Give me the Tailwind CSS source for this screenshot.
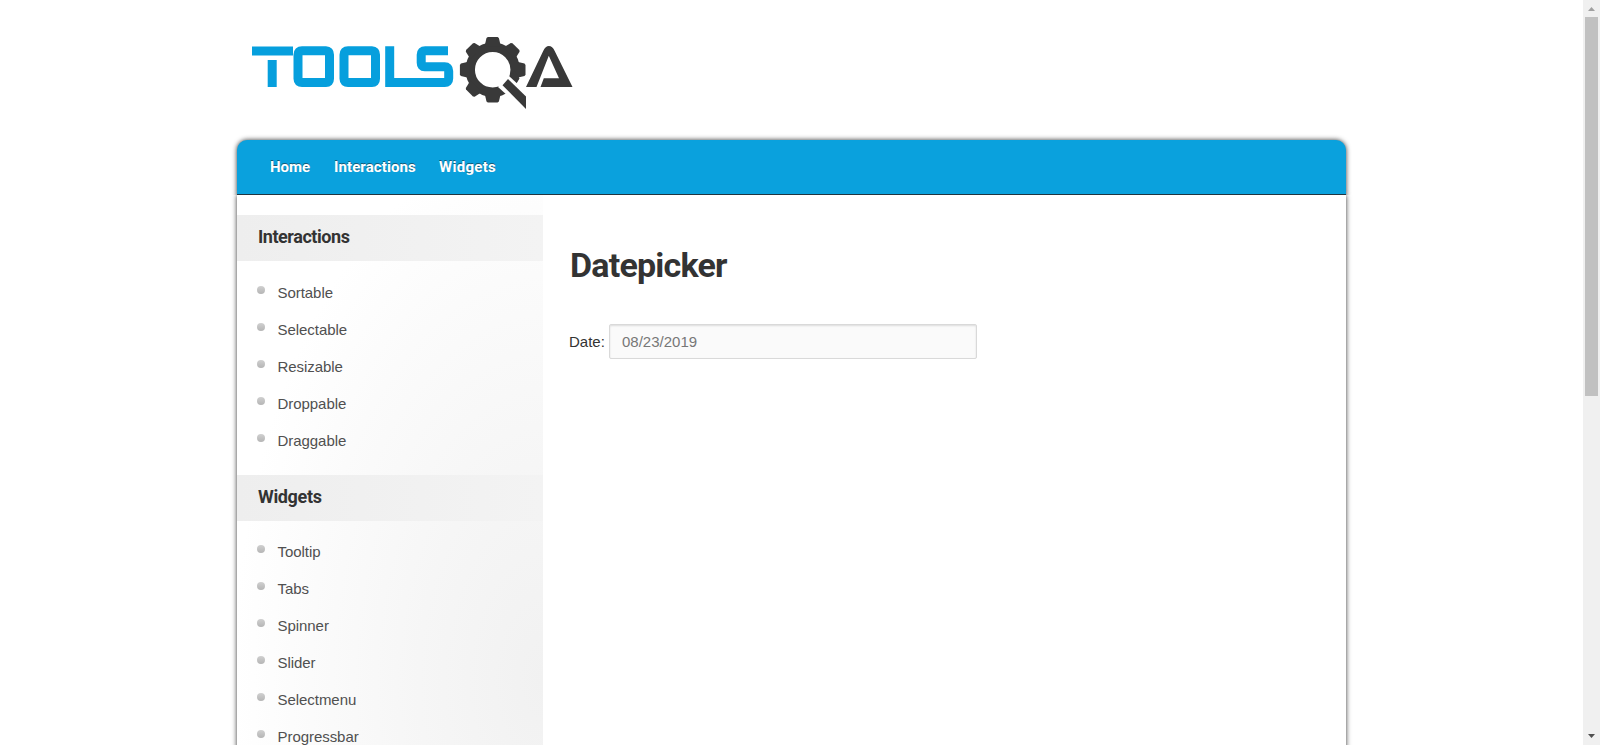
<!DOCTYPE html>
<html lang="en">
<head>
<meta charset="utf-8">
<title>Datepicker</title>
<script src="https://cdn.jsdelivr.net/npm/@tailwindcss/browser@4"></script>
</head>
<body class="flex h-[745px] overflow-hidden bg-white font-['Liberation_Sans',sans-serif] text-[15px] text-[#333]">
<div class="flex-1 overflow-hidden pl-[237px]">
  <header class="h-[140px] pt-[25px] pl-[3px]">
    <svg class="block" width="350" height="95" viewBox="240 25 350 95" role="img" aria-label="ToolsQA">
      <g fill="none" stroke="#069fdd" stroke-width="9">
        <path d="M252 51h41M272.2 60v27"/>
        <path d="M302 50.8h24q3.5 0 3.5 4v24q0 3.7-3.5 3.7h-24q-4 0-4-3.7v-24q0-4 4-4zM348 50.8h24q3.5 0 3.500 4v24q0 3.700-3.500 3.700h-24q-4 0-4-3.700v-24q0-4 4-4z"/>
        <path d="M389.7 46.3v36.2h55q4 0 4-4v-7.500q0-4.200-4-4.200h-20q-3.500 0-3.500-4v-8q0-4 4-4h22.800"/>
      </g>
      <g fill="#393939">
        <g transform="translate(0 .5)">
          <circle cx="492.700" cy="69.300" r="22.500" fill="none" stroke="#393939" stroke-width="9.500"/>
          <path id="tooth" d="M484.500 46l2-8.500 1.300-1h9.800l1.300 1 2 8.500z"/>
          <use href="#tooth" transform="rotate(45 492.700 69.300)"/>
          <use href="#tooth" transform="rotate(90 492.700 69.300)"/>
          <use href="#tooth" transform="rotate(180 492.700 69.300)"/>
          <use href="#tooth" transform="rotate(225 492.700 69.300)"/>
          <use href="#tooth" transform="rotate(270 492.700 69.300)"/>
          <use href="#tooth" transform="rotate(315 492.700 69.300)"/>
          <path d="M510 78l6.500 5 3-5-5-8z"/>
        </g>
        <path d="M498 87l11-11 19 17.500V114z" fill="#fff"/>
        <path d="M502.500 85.300l5.500-6.300 18 17.500V109z"/>
        <path d="M526 87l17.200-36q2.300-5 5.700-5 3.500 0 5.800 5L572.500 87H540.500l3.300-8.700H559l-10.200-22.500L536.500 87z"/>
      </g>
    </svg>
  </header>
  <div class="w-[1109px]">
    <nav class="relative z-10 flex h-[55px] gap-[24px] rounded-t-[10px] border-b border-[#203540] bg-[#0aa1dd] pl-[32px] pt-[15px] font-['Roboto',sans-serif] text-[15px] leading-[24px] font-bold text-white shadow-[0_0_5px_rgba(0,0,0,.8)] [clip-path:inset(-8px_-8px_0_-8px)] [text-shadow:0_-1px_0_#185b78]">
      <a class="w-[40px] pl-px tracking-[-0.050px]">Home</a>
      <a class="w-[82px] pl-px tracking-[0.100px]">Interactions</a>
      <a class="w-[57px] tracking-[0.300px]">Widgets</a>
    </nav>
    <main class="flex h-[700px] bg-white shadow-[0_0_5px_rgba(0,0,0,.8)]">
      <aside class="w-[306px] bg-[radial-gradient(ellipse_310px_540px_at_100%_485px,#f1f1f1_0%,#f6f6f6_40%,#fbfbfb_75%,#ffffff_100%)] pt-[20px]">
        <h2 class="h-[46px] bg-linear-to-r from-[#eeeeee] to-[#f3f3f3] pl-[21px] font-['Roboto',sans-serif] text-[18px] leading-[44px] font-bold tracking-[-0.450px]">Interactions</h2>
        <ul class="h-[214px] pt-[13px] leading-[37px] text-[#505050]">
          <li class="flex h-[37px] tracking-[-0.050px]"><i class="mt-[12px] mr-[12.500px] ml-[20px] size-2 rounded-full bg-linear-to-b from-[#d0d0d0] to-[#b5b5b5]"></i>Sortable</li>
          <li class="flex h-[37px] tracking-[-0.050px]"><i class="mt-[12px] mr-[12.500px] ml-[20px] size-2 rounded-full bg-linear-to-b from-[#d0d0d0] to-[#b5b5b5]"></i>Selectable</li>
          <li class="flex h-[37px] tracking-[-0.050px]"><i class="mt-[12px] mr-[12.500px] ml-[20px] size-2 rounded-full bg-linear-to-b from-[#d0d0d0] to-[#b5b5b5]"></i>Resizable</li>
          <li class="flex h-[37px] tracking-[-0.050px]"><i class="mt-[12px] mr-[12.500px] ml-[20px] size-2 rounded-full bg-linear-to-b from-[#d0d0d0] to-[#b5b5b5]"></i>Droppable</li>
          <li class="flex h-[37px] tracking-[-0.050px]"><i class="mt-[12px] mr-[12.500px] ml-[20px] size-2 rounded-full bg-linear-to-b from-[#d0d0d0] to-[#b5b5b5]"></i>Draggable</li>
        </ul>
        <h2 class="h-[46px] bg-linear-to-r from-[#eeeeee] to-[#f3f3f3] pl-[21px] font-['Roboto',sans-serif] text-[18px] leading-[44px] font-bold tracking-[-0.350px]">Widgets</h2>
        <ul class="pt-[12px] leading-[37px] text-[#505050]">
          <li class="flex h-[37px] tracking-[-0.050px]"><i class="mt-[12px] mr-[12.500px] ml-[20px] size-2 rounded-full bg-linear-to-b from-[#d0d0d0] to-[#b5b5b5]"></i>Tooltip</li>
          <li class="flex h-[37px] tracking-[-0.050px]"><i class="mt-[12px] mr-[12.500px] ml-[20px] size-2 rounded-full bg-linear-to-b from-[#d0d0d0] to-[#b5b5b5]"></i>Tabs</li>
          <li class="flex h-[37px] tracking-[-0.050px]"><i class="mt-[12px] mr-[12.500px] ml-[20px] size-2 rounded-full bg-linear-to-b from-[#d0d0d0] to-[#b5b5b5]"></i>Spinner</li>
          <li class="flex h-[37px] tracking-[-0.050px]"><i class="mt-[12px] mr-[12.500px] ml-[20px] size-2 rounded-full bg-linear-to-b from-[#d0d0d0] to-[#b5b5b5]"></i>Slider</li>
          <li class="flex h-[37px] tracking-[-0.050px]"><i class="mt-[12px] mr-[12.500px] ml-[20px] size-2 rounded-full bg-linear-to-b from-[#d0d0d0] to-[#b5b5b5]"></i>Selectmenu</li>
          <li class="flex h-[37px] tracking-[-0.050px]"><i class="mt-[12px] mr-[12.500px] ml-[20px] size-2 rounded-full bg-linear-to-b from-[#d0d0d0] to-[#b5b5b5]"></i>Progressbar</li>
        </ul>
      </aside>
      <section class="pt-[50px] pl-[26px]">
        <h1 class="h-[79px] pl-px font-['Roboto',sans-serif] text-[34px] leading-[40px] font-bold tracking-[-0.800px]">Datepicker</h1>
        <div class="flex items-center gap-[4px]">
          <label for="date" class="w-[36px] pt-px">Date:</label>
          <input id="date" value="08/23/2019" class="h-[35px] w-[368px] rounded-[2px] border border-[#d9d9d9] bg-[#fafafa] px-[12px] text-[15px] text-[#777] shadow-[inset_0_1px_2px_rgba(0,0,0,.12)]">
        </div>
      </section>
    </main>
  </div>
</div>
<div class="flex h-[745px] w-[17px] flex-col items-center bg-[#f0f0f0]">
  <svg class="h-[17px] w-[17px]" viewBox="0 0 17 17"><path d="M5 11h7L8.500 7z" fill="#a0a0a0"/></svg>
  <div class="h-[379px] w-[13px] bg-[#c1c1c1]"></div>
  <svg class="mt-auto h-[17px] w-[17px]" viewBox="0 0 17 17"><path d="M5 6h7l-3.500 4z" fill="#505050"/></svg>
</div>
</body>
</html>
